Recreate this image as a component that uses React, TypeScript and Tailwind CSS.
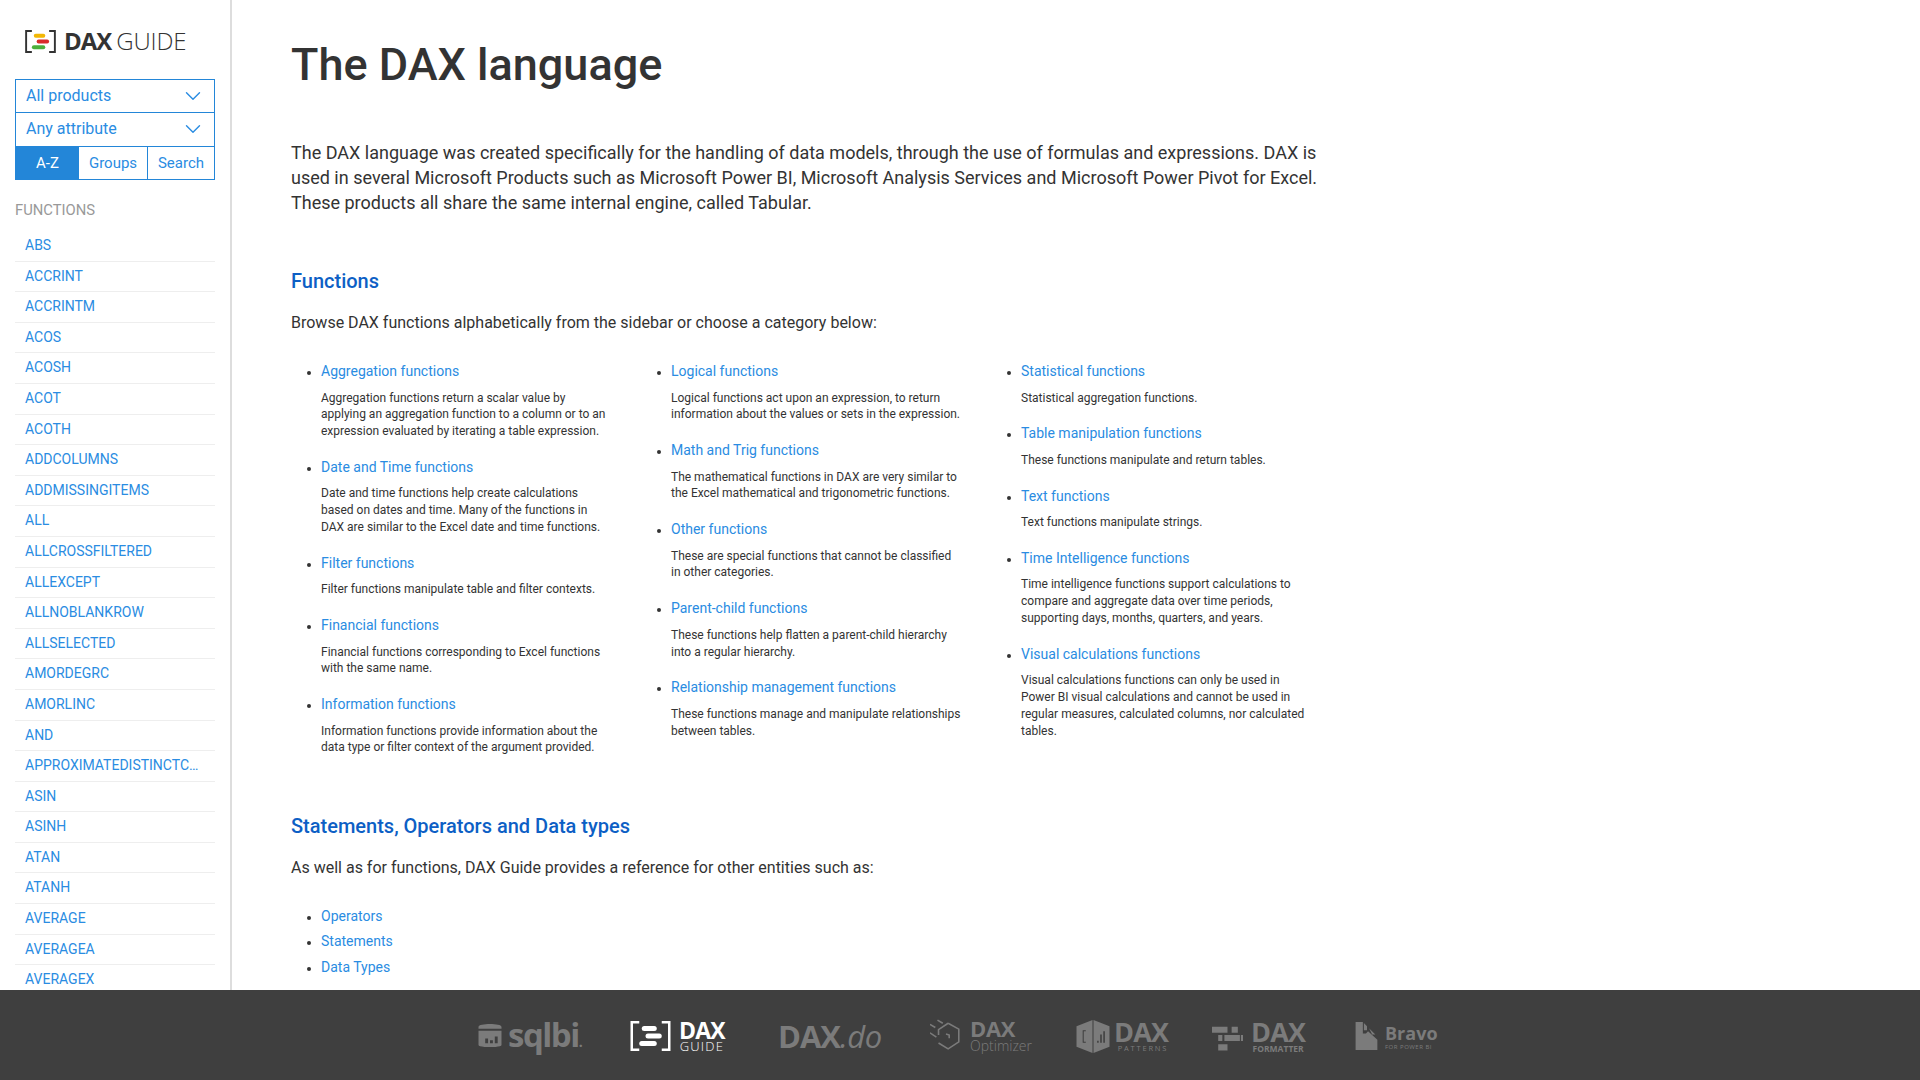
import { ChevronDown } from "lucide-react";

const sidebarItems = [
  "ABS", "ACCRINT", "ACCRINTM", "ACOS", "ACOSH", "ACOT", "ACOTH", "ADDCOLUMNS", "ADDMISSINGITEMS",
  "ALL", "ALLCROSSFILTERED", "ALLEXCEPT", "ALLNOBLANKROW", "ALLSELECTED", "AMORDEGRC", "AMORLINC",
  "AND", "APPROXIMATEDISTINCTCOUNT", "ASIN", "ASINH", "ATAN", "ATANH", "AVERAGE", "AVERAGEA", "AVERAGEX",
];

const columns = [
  [
    { title: "Aggregation functions", text: "Aggregation functions return a scalar value by applying an aggregation function to a column or to an expression evaluated by iterating a table expression." },
    { title: "Date and Time functions", text: "Date and time functions help create calculations based on dates and time. Many of the functions in DAX are similar to the Excel date and time functions." },
    { title: "Filter functions", text: "Filter functions manipulate table and filter contexts." },
    { title: "Financial functions", text: "Financial functions corresponding to Excel functions with the same name." },
    { title: "Information functions", text: "Information functions provide information about the data type or filter context of the argument provided." },
  ],
  [
    { title: "Logical functions", text: "Logical functions act upon an expression, to return information about the values or sets in the expression." },
    { title: "Math and Trig functions", text: "The mathematical functions in DAX are very similar to the Excel mathematical and trigonometric functions." },
    { title: "Other functions", text: "These are special functions that cannot be classified in other categories." },
    { title: "Parent-child functions", text: "These functions help flatten a parent-child hierarchy into a regular hierarchy." },
    { title: "Relationship management functions", text: "These functions manage and manipulate relationships between tables." },
  ],
  [
    { title: "Statistical functions", text: "Statistical aggregation functions." },
    { title: "Table manipulation functions", text: "These functions manipulate and return tables." },
    { title: "Text functions", text: "Text functions manipulate strings." },
    { title: "Time Intelligence functions", text: "Time intelligence functions support calculations to compare and aggregate data over time periods, supporting days, months, quarters, and years." },
    { title: "Visual calculations functions", text: "Visual calculations functions can only be used in Power BI visual calculations and cannot be used in regular measures, calculated columns, nor calculated tables." },
  ],
];

function GuideMark({ color, top, mid, bottom, className }: { color: string; top: string; mid: string; bottom: string; className: string }) {
  return (
    <svg viewBox="0 0 32 24" className={className}>
      <path d="M7 1H1v22h6M25 1h6v22h-6" fill="none" stroke={color} strokeWidth="2" />
      <rect x="9" y="4" width="12" height="4" rx="2" fill={top} />
      <rect x="12" y="10" width="13" height="4" rx="2" fill={mid} />
      <rect x="7" y="16" width="14" height="4" rx="2" fill={bottom} />
    </svg>
  );
}

function Footer() {
  return (
    <footer className="h-[90px] shrink-0 bg-[#3f3f3f] flex items-center justify-center pr-[5px] text-[#7b7b7b] font-['Open_Sans',sans-serif]">
      {/* sqlbi */}
      <div className="flex items-center gap-[6px] w-[103px] shrink-0">
        <svg viewBox="0 0 24 24" className="w-[24px] h-[23px] shrink-0" fill="#7b7b7b">
          <path d="M0 3c0-4 24-4 24 0v2H0zM0 7h24v15c0 3-24 3-24 0zM7 15v5h3v-5zM12 17v3h3v-3zM17 13v7h3v-7z" fillRule="evenodd" />
        </svg>
        <span className="text-[33px] leading-none font-bold tracking-[-1.5px] whitespace-nowrap -mt-[2px]">sqlbi<span className="text-[14px]">.</span></span>
      </div>
      {/* DAX Guide */}
      <div className="flex items-center gap-[8px] w-[94px] ml-[49px] shrink-0 text-white mt-[2px]">
        <GuideMark color="#fff" top="#fff" mid="#fff" bottom="#fff" className="w-[41px] h-[30px] shrink-0" />
        <div className="flex flex-col items-center">
          <span className="text-[23px] leading-[20px] font-bold tracking-[-0.8px]">DAX</span>
          <span className="text-[13px] leading-[12px] font-light tracking-[1.2px]">GUIDE</span>
        </div>
      </div>
      {/* DAX.do */}
      <div className="flex items-baseline w-[102px] ml-[54px] shrink-0 text-[31px] leading-none mt-[2px]">
        <span className="font-bold tracking-[-1px]">DAX</span>
        <span className="font-normal italic tracking-[-0.5px]">.do</span>
      </div>
      {/* DAX Optimizer */}
      <div className="flex items-center gap-[8px] w-[101px] ml-[50px] shrink-0">
        <svg viewBox="0 0 30 30" className="w-[32px] h-[32px] shrink-0" fill="none" stroke="#7b7b7b" strokeWidth="1.5">
          <path d="M17 4l10 5.500v12L17 28 8 22.500M8 15V10l9-6" />
          <path d="M15 14l3 1v3M0 5l5 3M7 1l5 3M0 13l6 4" />
        </svg>
        <div className="flex flex-col">
          <span className="text-[22px] leading-[20px] font-bold tracking-[-0.3px]">DAX</span>
          <span className="text-[14px] leading-[15px] font-light">Optimizer</span>
        </div>
      </div>
      {/* DAX Patterns */}
      <div className="flex items-center gap-[4px] w-[92px] ml-[45px] shrink-0 mt-[2px]">
        <svg viewBox="0 0 32 32" className="w-[34px] h-[33px] shrink-0" fill="#7b7b7b">
          <path d="M15.500 0v32L0 26V6zM16.500 0L32 6v20l-15.500 6z" />
          <path d="M6 10h3v1H7v10h2v1H6zM20 20h1.500v2H20zM23 14h1.500v8H23zM26 11h1.500v11H26z" fill="#3f3f3f" />
        </svg>
        <div className="flex flex-col items-end">
          <span className="text-[27px] leading-[25px] font-bold tracking-[-0.8px]">DAX</span>
          <span className="text-[7.500px] leading-[9px] tracking-[1.8px] whitespace-nowrap">PATTERNS</span>
        </div>
      </div>
      {/* DAX Formatter */}
      <div className="flex items-center gap-[8px] w-[94px] ml-[44px] shrink-0 mt-[2px]">
        <svg viewBox="0 0 30 26" className="w-[31px] h-[28px] shrink-0 mt-[4px]" fill="#7b7b7b">
          <path d="M0 2h15v6H0zM19 2h6v6h-6zM12 10h15v6H12zM28 10h3v6h-3zM6 19h9v6H6zM6 10h4v6H6z" />
        </svg>
        <div className="flex flex-col items-center">
          <span className="text-[27px] leading-[25px] font-bold tracking-[-0.8px]">DAX</span>
          <span className="text-[8.500px] leading-[10px] font-bold whitespace-nowrap">FORMATTER</span>
        </div>
      </div>
      {/* Bravo */}
      <div className="flex items-center gap-[6px] w-[82px] ml-[49px] shrink-0">
        <svg viewBox="0 0 22 27" className="w-[24px] h-[28px] shrink-0 mt-[2px]" fill="#7b7b7b">
          <path d="M0 0h7v11h3l2-2 9 8v10H0zM8 1l3 3v4H8zM13 6l6 6h-3z" />
        </svg>
        <div className="flex flex-col mt-[4px]">
          <span className="text-[18px] leading-[19px] font-bold">Bravo</span>
          <span className="text-[6px] leading-[8px] tracking-[0.5px] whitespace-nowrap">FOR POWER BI</span>
        </div>
      </div>
    </footer>
  );
}

function Sidebar() {
  return (
    <aside className="w-[232px] shrink-0 border-r-2 border-[#dddddd] overflow-hidden px-[15px]">
      <div className="flex items-center gap-[7px] pl-[9px] h-[24px] mt-[29px]">
        <GuideMark color="#333" top="#f2b705" mid="#d92b2b" bottom="#4caf3c" className="w-[33px] h-[23px] shrink-0" />
        <div className="flex items-baseline text-[#333] font-['Open_Sans',sans-serif] text-[24px] leading-none">
          <span className="font-bold tracking-[-1px]">DAX</span>
          <span className="font-light ml-[5px] tracking-[-0.2px]">GUIDE</span>
        </div>
      </div>
      <div className="mt-[26px] w-[200px] border border-[#2386d8] text-[#2a8ce2] text-[16px]">
        <div className="h-[33px] flex items-center justify-between pl-[10px] pr-[8px] border-b border-[#2386d8]">
          All products
          <ChevronDown size={26} strokeWidth={1.3} />
        </div>
        <div className="h-[34px] flex items-center justify-between pl-[10px] pr-[8px] border-b border-[#2386d8] pb-[1px]">
          Any attribute
          <ChevronDown size={26} strokeWidth={1.3} />
        </div>
        <div className="h-[32px] flex items-center text-center text-[15px]">
          <span className="w-[63px] h-full leading-[33px] bg-[#2386d8] text-white">A-Z</span>
          <span className="w-[69px] h-full leading-[33px] border-r border-[#2386d8]">Groups</span>
          <span className="flex-1 h-full leading-[33px]">Search</span>
        </div>
      </div>
      <div className="mt-[20px] text-[14.800px] leading-[20px] text-[#999999]">FUNCTIONS</div>
      <ul className="mt-[11px] w-[200px] text-[14px]">
        {sidebarItems.map((name) => (
          <li key={name} className="h-[30.600px] leading-[29px] pl-[10px] pr-[15px] border-b border-[#eeeeee] text-[#2a8ce2] truncate">
            {name}
          </li>
        ))}
      </ul>
    </aside>
  );
}

export default function App() {
  return (
    <div className="h-screen flex flex-col overflow-hidden bg-white font-['Roboto',sans-serif]">
      <div className="flex flex-1 min-h-0">
        <Sidebar />
        <main className="flex-1 overflow-hidden pl-[59px] text-[#333333]">
          <h1 className="mt-[40px] text-[45px] leading-[50px] font-medium">The DAX language</h1>
          <p className="mt-[50px] w-[1040px] text-[18px] leading-[25px]">
            The DAX language was created specifically for the handling of data models, through the use of formulas and expressions. DAX is used in several Microsoft Products such as Microsoft Power BI, Microsoft Analysis Services and Microsoft Power Pivot for Excel. These products all share the same internal engine, called Tabular.
          </p>
          <h2 className="mt-[52px] text-[20px] leading-[28px] font-medium text-[#0d5fc5]">Functions</h2>
          <p className="mt-[15px] text-[16px] leading-[25px]">Browse DAX functions alphabetically from the sidebar or choose a category below:</p>
          <div className="mt-[26px] grid grid-cols-[350px_350px_350px]">
            {columns.map((col, i) => (
              <ul key={i} className="pl-[30px] list-disc">
                {col.map((item) => (
                  <li key={item.title} className="mb-[17px] text-[12px]">
                    <a className="block h-[21px] leading-[21px] text-[14px] text-[#2a8ce2]">{item.title}</a>
                    <p className="mt-[7.500px] w-[291px] text-[12px] leading-[16.800px]">{item.text}</p>
                  </li>
                ))}
              </ul>
            ))}
          </div>
          <h2 className="mt-[38.500px] text-[20px] leading-[28px] font-medium text-[#0d5fc5]">Statements, Operators and Data types</h2>
          <p className="mt-[15px] text-[16px] leading-[25px]">As well as for functions, DAX Guide provides a reference for other entities such as:</p>
          <ul className="mt-[26px] pl-[30px] list-disc text-[12px]">
            <li className="h-[25.500px] leading-[21px]"><a className="text-[14px] text-[#2a8ce2]">Operators</a></li>
            <li className="h-[25.500px] leading-[21px]"><a className="text-[14px] text-[#2a8ce2]">Statements</a></li>
            <li className="h-[25.500px] leading-[21px]"><a className="text-[14px] text-[#2a8ce2]">Data Types</a></li>
          </ul>
        </main>
      </div>
      <Footer />
    </div>
  );
}
